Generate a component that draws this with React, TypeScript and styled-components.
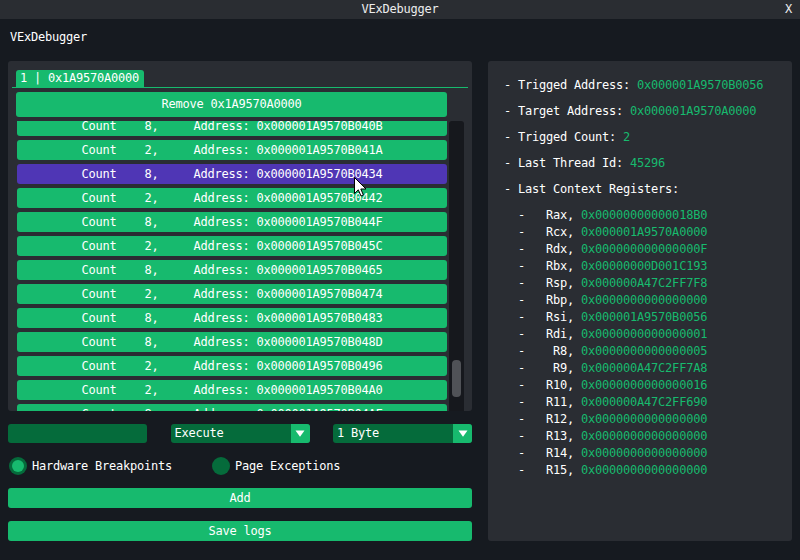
import React from 'react';
import styled, { createGlobalStyle } from 'styled-components';

const GREEN = '#17ba6e';
const DARK_GREEN = '#056b3b';
const PURPLE = '#4f36b5';
const PANEL = '#2a2d33';
const BODY = '#161a20';

const GlobalStyle = createGlobalStyle`
  html, body { margin: 0; padding: 0; background: ${BODY}; }
  body {
    width: 800px; height: 560px; overflow: hidden;
    font-family: "DejaVu Sans Mono", "Liberation Mono", monospace;
    font-size: 12px; letter-spacing: -0.22px; color: #ffffff;
  }
  * { box-sizing: border-box; }
`;

const Window = styled.div`
  position: relative;
  width: 800px;
  height: 560px;
  display: flex;
  flex-direction: column;
  background: ${BODY};
  overflow: hidden;
`;

const TitleBar = styled.div`
  height: 19px;
  background: #2a2d32;
  display: grid;
  grid-template-columns: 1fr auto 1fr;
  align-items: center;
  line-height: 13px;
  color: #ececec;
`;

const TitleText = styled.span`
  grid-column: 2;
`;

const CloseButton = styled.span`
  grid-column: 3;
  justify-self: end;
  padding-right: 8px;
`;

const Body = styled.div`
  display: flex;
  flex-direction: column;
  padding: 12px 8px 0;
`;

const MenuLabel = styled.div`
  line-height: 13px;
  padding-left: 2px;
  margin-bottom: 17px;
`;

const Columns = styled.div`
  display: flex;
  gap: 16px;
  height: 480px;
`;

const LeftColumn = styled.div`
  width: 464px;
  display: flex;
  flex-direction: column;
`;

const Panel = styled.div`
  height: 350px;
  background: ${PANEL};
  border-radius: 3px;
  display: flex;
  flex-direction: column;
  padding: 9px 4px 0;
`;

const TabBar = styled.div`
  display: flex;
  padding-left: 4px;
  border-bottom: 1px solid ${GREEN};
`;

const Tab = styled.div`
  height: 17px;
  line-height: 17px;
  padding: 0 5px 0 4px;
  background: ${GREEN};
  border-radius: 3px 3px 0 0;
`;

const Button = styled.div<{ $height?: number; $inset?: number }>`
  height: ${(p) => p.$height ?? 20}px;
  line-height: ${(p) => p.$height ?? 20}px;
  margin-left: ${(p) => p.$inset ?? 0}px;
  background: ${GREEN};
  border-radius: 3px;
  text-align: center;
  white-space: pre;
`;

const RemoveButton = styled(Button)`
  width: 431px;
  margin-top: 4px;
`;

const ListArea = styled.div`
  flex: 1;
  margin-top: 4px;
  display: flex;
  min-height: 0;
`;

const Viewport = styled.div`
  flex: 1;
  overflow: hidden;
  padding-left: 5px;
`;

const RowsContent = styled.div`
  display: flex;
  flex-direction: column;
  gap: 4px;
  margin-top: -5px;
`;

const Row = styled.div<{ $selected?: boolean }>`
  width: 430px;
  height: 20px;
  line-height: 20px;
  text-align: center;
  white-space: pre;
  border-radius: 3px;
  background: ${(p) => (p.$selected ? PURPLE : GREEN)};
`;

const ScrollTrack = styled.div`
  width: 15px;
  margin: 0 4px 0 2px;
  background: #16181d;
  border-radius: 3px 3px 0 0;
  display: flex;
  flex-direction: column;
  padding: 239px 3px 0 3px;
`;

const ScrollThumb = styled.div`
  height: 37px;
  background: #505257;
  border-radius: 4px;
`;

const ControlsRow = styled.div`
  margin-top: 13px;
  display: flex;
  justify-content: space-between;
  height: 19px;
`;

const InputBox = styled.div`
  width: 139px;
  background: ${DARK_GREEN};
  border-radius: 3px;
`;

const Combo = styled.div`
  width: 139px;
  display: flex;
  background: ${DARK_GREEN};
  border-radius: 3px;
  line-height: 19px;
`;

const ComboLabel = styled.span`
  flex: 1;
  padding-left: 4px;
`;

const ComboArrow = styled.div`
  width: 19px;
  background: ${GREEN};
  border-radius: 0 3px 3px 0;
  display: flex;
  align-items: center;
  justify-content: center;
`;

const RadioRow = styled.div`
  margin-top: 14px;
  height: 18px;
  display: flex;
  align-items: center;
  gap: 40px;
  padding-left: 1px;
`;

const RadioItem = styled.div`
  display: flex;
  align-items: center;
  gap: 5px;
  line-height: 13px;
`;

const RadioCircle = styled.div<{ $checked?: boolean }>`
  width: 18px;
  height: 18px;
  border-radius: 50%;
  background: ${DARK_GREEN};
  display: flex;
  align-items: center;
  justify-content: center;
  &::after {
    content: '';
    width: 12px;
    height: 12px;
    border-radius: 50%;
    background: ${(p) => (p.$checked ? GREEN : 'transparent')};
  }
`;

const ActionButton = styled(Button)`
  margin-top: 13px;
`;

const RightPanel = styled.div`
  width: 304px;
  height: 480px;
  background: ${PANEL};
  border-radius: 3px;
  padding: 18px 16px 0;
  display: flex;
  flex-direction: column;
`;

const InfoLine = styled.div`
  line-height: 13px;
  margin-bottom: 13px;
  white-space: pre;
`;

const RegLine = styled.div`
  line-height: 13px;
  margin-bottom: 4px;
  white-space: pre;
`;

const Value = styled.span`
  color: ${GREEN};
`;

const Cursor = styled.svg`
  position: absolute;
  left: 354px;
  top: 177px;
  pointer-events: none;
`;

const rows: [string, string][] = [
  ['8', '40B'],
  ['2', '41A'],
  ['8', '434'],
  ['2', '442'],
  ['8', '44F'],
  ['2', '45C'],
  ['8', '465'],
  ['2', '474'],
  ['8', '483'],
  ['8', '48D'],
  ['2', '496'],
  ['2', '4A0'],
  ['8', '4AF'],
];

const info: [string, string][] = [
  ['- Trigged Address: ', '0x000001A9570B0056'],
  ['- Target Address: ', '0x000001A9570A0000'],
  ['- Trigged Count: ', '2'],
  ['- Last Thread Id: ', '45296'],
];

const regs: [string, string][] = [
  ['Rax', '0x00000000000018B0'],
  ['Rcx', '0x000001A9570A0000'],
  ['Rdx', '0x000000000000000F'],
  ['Rbx', '0x00000000D001C193'],
  ['Rsp', '0x000000A47C2FF7F8'],
  ['Rbp', '0x0000000000000000'],
  ['Rsi', '0x000001A9570B0056'],
  ['Rdi', '0x0000000000000001'],
  ['R8', '0x0000000000000005'],
  ['R9', '0x000000A47C2FF7A8'],
  ['R10', '0x0000000000000016'],
  ['R11', '0x000000A47C2FF690'],
  ['R12', '0x0000000000000000'],
  ['R13', '0x0000000000000000'],
  ['R14', '0x0000000000000000'],
  ['R15', '0x0000000000000000'],
];

const Triangle = () => (
  <svg width="10" height="7" viewBox="0 0 10 7">
    <polygon points="0.5,0.5 9.5,0.5 5,6.8" fill="#ffffff" />
  </svg>
);

export default function App() {
  return (
    <>
      <GlobalStyle />
      <Window>
        <TitleBar>
          <TitleText>VExDebugger</TitleText>
          <CloseButton>X</CloseButton>
        </TitleBar>
        <Body>
          <MenuLabel>VExDebugger</MenuLabel>
          <Columns>
            <LeftColumn>
              <Panel>
                <TabBar>
                  <Tab>1 | 0x1A9570A0000</Tab>
                </TabBar>
                <RemoveButton $height={25} $inset={4}>
                  Remove 0x1A9570A0000
                </RemoveButton>
                <ListArea>
                  <Viewport>
                    <RowsContent>
                      {rows.map(([count, addr], i) => (
                        <Row key={i} $selected={i === 2}>
                          {`Count    ${count},     Address: 0x000001A9570B0${addr}`}
                        </Row>
                      ))}
                    </RowsContent>
                  </Viewport>
                  <ScrollTrack>
                    <ScrollThumb />
                  </ScrollTrack>
                </ListArea>
              </Panel>
              <ControlsRow>
                <InputBox />
                <Combo>
                  <ComboLabel>Execute</ComboLabel>
                  <ComboArrow>
                    <Triangle />
                  </ComboArrow>
                </Combo>
                <Combo>
                  <ComboLabel>1 Byte</ComboLabel>
                  <ComboArrow>
                    <Triangle />
                  </ComboArrow>
                </Combo>
              </ControlsRow>
              <RadioRow>
                <RadioItem>
                  <RadioCircle $checked />
                  <span>Hardware Breakpoints</span>
                </RadioItem>
                <RadioItem>
                  <RadioCircle />
                  <span>Page Exceptions</span>
                </RadioItem>
              </RadioRow>
              <ActionButton>Add</ActionButton>
              <ActionButton>Save logs</ActionButton>
            </LeftColumn>
            <RightPanel>
              {info.map(([label, value]) => (
                <InfoLine key={label}>
                  {label}
                  <Value>{value}</Value>
                </InfoLine>
              ))}
              <InfoLine>- Last Context Registers:</InfoLine>
              {regs.map(([name, value]) => (
                <RegLine key={name}>
                  {`  -   ${name.padStart(3, ' ')}, `}
                  <Value>{value}</Value>
                </RegLine>
              ))}
            </RightPanel>
          </Columns>
        </Body>
        <Cursor width="13" height="20" viewBox="0 0 13 20">
          <path
            d="M0.5 0.5 L0.5 16.5 L4.3 12.8 L7 19 L9.4 18 L6.8 12 L12 12 Z"
            fill="#ffffff"
            stroke="#000000"
            strokeWidth="1"
            strokeLinejoin="round"
          />
        </Cursor>
      </Window>
    </>
  );
}
